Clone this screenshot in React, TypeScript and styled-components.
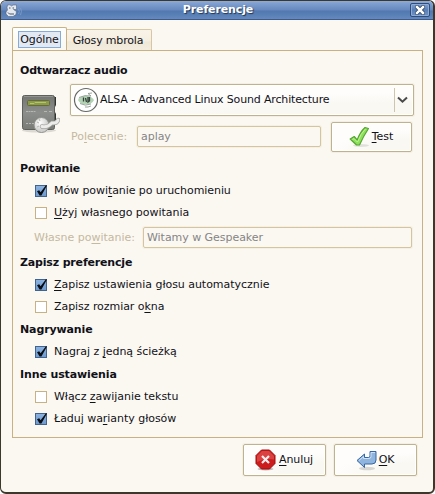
import React from "react";
import styled, { createGlobalStyle, css } from "styled-components";

const Global = createGlobalStyle`
  * { box-sizing: border-box; }
  body { margin: 0; background: #fff; }
  body, button, input { font: 11px/16px "DejaVu Sans", sans-serif; color: #111118; }
`;

const Window = styled.div`
  width: 435px;
  height: 494px;
  display: flex;
  flex-direction: column;
  background: #fbf8f1;
  border: 1px solid #3d382c;
  border-right-width: 2px;
  border-bottom-width: 2px;
  border-radius: 6px;
  overflow: hidden;
`;

const TitleBar = styled.header`
  height: 19px;
  flex: none;
  display: grid;
  grid-template-columns: 28px 1fr 28px;
  align-items: center;
  border-bottom: 1px solid #3c5a8c;
  background: linear-gradient(#8fabd8 0, #7d9dce 3px, #6688bd 9px, #5178b0 10px, #6389bd 18px);
`;

const Title = styled.h1`
  margin: 0;
  padding-left: 2px;
  text-align: center;
  font-size: 11px;
  line-height: 16px;
  letter-spacing: -0.12px;
  color: #fff;
  text-shadow: 1px 1px 1px #1e3558;
`;

const AppIcon = styled.svg`
  width: 20px;
  height: 14px;
  margin: 2px 0 0 3px;
`;

const CloseButton = styled.button`
  width: 20px;
  height: 14px;
  padding: 0;
  margin-left: 5px;
  display: flex;
  align-items: center;
  justify-content: center;
  border: 1px solid #2f4d7c;
  border-radius: 2px;
  background: linear-gradient(#7f9fce, #587fb6 50%, #6f93c5);
  box-shadow: inset 0 0 0 1px #8dabd5;
`;

const Body = styled.main`
  flex: 1;
  display: flex;
  flex-direction: column;
  padding: 7px 10px 0 11px;
`;

const Tabs = styled.nav`
  display: flex;
  align-items: flex-end;
  height: 24px;
  margin-bottom: -1px;
`;

const Tab = styled.button<{ $active?: boolean }>`
  padding: 0;
  display: flex;
  align-items: center;
  justify-content: center;
  border: 1px solid #c8b283;
  ${(p) =>
    p.$active
      ? css`
          width: 55px;
          height: 24px;
          border-bottom-color: #fbf8f1;
          background: linear-gradient(#ffffff, #fcfaf5 60%, #fbf8f1);
          border-radius: 2px 2px 0 0;
        `
      : css`
          width: 85px;
          height: 22px;
          border-left: 0;
          border-top-color: #d7c69f;
          border-right-color: #d7c69f;
          padding: 1px 2px 0 0;
          letter-spacing: -0.17px;
          background: linear-gradient(#f8f3e9 0, #f5eee1 11px, #efe7d7 12px, #f4ecdf);
          border-radius: 0 2px 0 0;
        `}
`;

const FocusLabel = styled.span`
  width: 43px;
  height: 17px;
  line-height: 15px;
  letter-spacing: -0.1px;
  border: 1px solid #86abd6;
  background: #e3e9f2;
`;

const Panel = styled.section`
  height: 388px;
  flex: none;
  border: 1px solid #c8b283;
  padding: 8px 8px 0 7px;
`;

const Heading = styled.h2<{ $h?: number; $s?: number }>`
  margin: 0;
  height: ${(p) => p.$h ?? 22}px;
  line-height: ${(p) => (p.$h ? 26 : 24)}px;
  font-size: 11px;
  letter-spacing: ${(p) => p.$s ?? -0.12}px;
`;

const AudioRow = styled.div`
  display: flex;
  height: 68px;
  margin: 3px 0 5px;
`;

const PlayerIcon = styled.svg`
  width: 40px;
  height: 40px;
  margin: 10px 10px 0 0;
  flex: none;
`;

const AudioFields = styled.div`
  width: 344px;
  flex: none;
  display: flex;
  flex-direction: column;
  gap: 6px;
`;

const raised = css`
  border: 1px solid #bfb28e;
  border-radius: 2px;
  background: radial-gradient(ellipse 100% 75% at 100% 100%, #faf8f3 0 55%, #fefdfc 100%);
  box-shadow: 0 0 0 1px #f4efe4, inset 0 0 0 1px #fff;
`;

const Combo = styled.div`
  height: 32px;
  display: flex;
  align-items: center;
  padding-left: 2px;
  ${raised}
`;

const ComboText = styled.span`
  flex: 1;
  padding-left: 1px;
  white-space: nowrap;
  letter-spacing: -0.16px;
`;

const ComboArrow = styled.span`
  width: 19px;
  height: 24px;
  border-left: 1px solid #cfc5a9;
  display: flex;
  align-items: center;
  padding-left: 2px;
`;

const CommandRow = styled.div`
  display: flex;
  align-items: center;
`;

const TestSlot = styled.div`
  margin-left: 10px;
`;

const FieldLabel = styled.label<{ $w: number }>`
  width: ${(p) => p.$w}px;
  flex: none;
  padding-left: 1px;
  color: #c5b99f;
  white-space: nowrap;
`;

const Entry = styled.input<{ $w: number }>`
  width: ${(p) => p.$w}px;
  height: 21px;
  margin-bottom: 1px;
  padding: 0 3px;
  border: 1px solid #d5c49c;
  border-radius: 2px;
  background: #fbf8f1;
  color: #858585;
  letter-spacing: -0.04px;
  box-shadow: 0 0 0 1px #f5f0e5;
`;

const Button = styled.button<{ $w: number; $h?: number; $gap?: number }>`
  width: ${(p) => p.$w}px;
  height: ${(p) => p.$h ?? 32}px;
  padding: 0 1px 0 0;
  display: flex;
  align-items: center;
  justify-content: center;
  gap: ${(p) => p.$gap ?? 3}px;
  ${raised}
`;

const CheckRow = styled.label`
  height: 22px;
  display: flex;
  align-items: center;
  padding: 2px 0 0 15px;
  gap: 7px;
  white-space: nowrap;
`;

const CheckBox = styled.span<{ $on?: boolean }>`
  width: 12px;
  height: 12px;
  border: 1px solid ${(p) => (p.$on ? "#40648f" : "#c8b283")};
  background: ${(p) => (p.$on ? "linear-gradient(#8bb2e0, #6e9bd0)" : "#fff")};
`;

const Tick = styled.svg`
  display: block;
  width: 12px;
  height: 12px;
  margin: -1px;
  overflow: visible;
`;

const FieldRow = styled.div`
  height: 28px;
  padding: 1px 0 0 13px;
  display: flex;
  align-items: center;
`;

const Footer = styled.footer`
  display: flex;
  justify-content: flex-end;
  gap: 8px;
  padding: 6px 6px 0 0;
`;

const Key = styled.span`
  text-decoration: underline;
  text-decoration-thickness: 1px;
  text-underline-offset: 2px;
  text-decoration-skip-ink: none;
`;

const Label = styled.span<{ $s?: number }>`
  letter-spacing: ${(p) => p.$s ?? 0}px;
`;

/* An underscore marks the letter that follows it as the keyboard mnemonic. */
function Mnemonic({ text, spacing }: { text: string; spacing?: number }) {
  const i = text.indexOf("_");
  if (i < 0) return <Label $s={spacing}>{text}</Label>;
  return (
    <Label $s={spacing}>
      {text.slice(0, i)}
      <Key>{text[i + 1]}</Key>
      {text.slice(i + 2)}
    </Label>
  );
}

function Check({ text, on, spacing = -0.04 }: { text: string; on?: boolean; spacing?: number }) {
  return (
    <CheckRow>
      <CheckBox $on={on}>
        {on && (
          <Tick viewBox="0 0 12 12">
            <path d="M2 6.300 4.200 5.200 5.600 7.300 10.900.300 12 .5 6.400 10.600H4.600Z" fill="#0a0d12" />
          </Tick>
        )}
      </CheckBox>
      <Mnemonic text={text} spacing={spacing} />
    </CheckRow>
  );
}

function Player() {
  return (
    <PlayerIcon viewBox="0 0 40 40">
      <defs>
        <linearGradient id="case" x2="0" y2="1">
          <stop stopColor="#727571" />
          <stop offset=".5" stopColor="#8b8e8a" />
          <stop offset="1" stopColor="#787b76" />
        </linearGradient>
        <radialGradient id="dial" cx=".4" cy=".35">
          <stop stopColor="#fff" />
          <stop offset="1" stopColor="#d0d1cf" />
        </radialGradient>
      </defs>
      <ellipse cx="19" cy="36.5" rx="17" ry="2" fill="#000" opacity=".12" />
      <path d="M34 3h2v8l-1 2v5l1 2v6h-2Z" fill="#30332f" />
      <rect x="2.5" y="1.500" width="32" height="34" rx="2" fill="url(#case)" stroke="#5d605b" />
      <path d="M4 2.500h29" stroke="#91948f" />
      <rect x="7.500" y="6.500" width="22" height="5" rx="1" fill="#8c9b4a" stroke="#656b3b" />
      <path d="M10 9.500h4l1-1h11" stroke="#b4c568" fill="none" />
      <path d="M6 17.500h10" stroke="#b4b7b2" strokeDasharray="2 .5" />
      <path d="M24 17.500h3m2 0h3M6 29.500h2m1 0h2m1 0h2" stroke="#b4b7b2" />
      <circle cx="21.500" cy="31" r="7.500" fill="url(#dial)" stroke="#8e918c" />
      <path d="m17 28 2 1m0-4 1 2m-3 6 2-1m3 3v-2" stroke="#b4b7b2" />
      <path d="M22 32.500c5 1 7-1 10-3.500 1 0 5 1 6-3" stroke="#a3a5a1" strokeWidth="4.400" strokeLinecap="round" fill="none" />
      <path d="M22 32.500c5 1 7-1 10-3.500 1 0 5 1 6-3" stroke="#ececea" strokeWidth="3" strokeLinecap="round" fill="none" />
    </PlayerIcon>
  );
}

export default function App() {
  return (
    <>
      <Global />
      <Window>
        <TitleBar>
          <AppIcon viewBox="0 0 20 14">
            <path d="M3 3.500 3.500 1 6 .8 7.500 2 9 1h3.500v4.500H9.500l3 2-.5 3-3 2H4.500L2 10V8l1.500-2Z" fill="#e5e8ec" stroke="#55677f" strokeWidth=".6" />
            <path d="M5 4h1.500m2 0H10M4 8.500l1.500 1.500H10" stroke="#45597a" fill="none" />
            <path d="M14.500 5q1.500 2.500 0 5m2-6q2 3 0 7" stroke="#86a4d0" fill="none" strokeWidth=".7" />
          </AppIcon>
          <Title>Preferencje</Title>
          <CloseButton aria-label="Zamknij">
            <svg width="10" height="10" viewBox="0 0 10 10">
              <path d="m2 2 6 6m0-6L2 8" stroke="#243d62" strokeWidth="4" strokeLinecap="square" />
              <path d="m2 2 6 6m0-6L2 8" stroke="#fff" strokeWidth="2.500" strokeLinecap="square" />
            </svg>
          </CloseButton>
        </TitleBar>
        <Body>
          <Tabs>
            <Tab $active>
              <FocusLabel>Ogólne</FocusLabel>
            </Tab>
            <Tab>Głosy mbrola</Tab>
          </Tabs>
          <Panel>
            <Heading $s={-0.2}>Odtwarzacz audio</Heading>
            <AudioRow>
              <Player />
              <AudioFields>
                <Combo>
                  <svg width="26" height="26" viewBox="0 0 26 26">
                    <circle cx="13" cy="13" r="11.500" fill="#fff" stroke="#626864" strokeWidth="1.200" />
                    <path d="M5 13q2-4.500 9-4 5 .5 7 4-2 4.500-9 4.500-5-.5-7-4.500Z" fill="#b2d3b4" />
                    <path d="M6 10.500q6-3 12-1.500l-3-2.500 4-.5M7 16.500q5 3 11 .5m-6 3q3 .5 6-1" stroke="#8f9891" strokeWidth=".9" fill="none" />
                    <path d="M10.500 10.500v4M12.500 11l1 4m1.500-5v5l1.500-1v-4" stroke="#344039" strokeWidth="1.300" fill="none" />
                  </svg>
                  <ComboText>ALSA - Advanced Linux Sound Architecture</ComboText>
                  <ComboArrow>
                    <svg width="11" height="8" viewBox="0 0 11 8">
                      <path d="m1 1.500 4.500 4.200L10 1.500" stroke="#4a4a4a" strokeWidth="2" fill="none" />
                    </svg>
                  </ComboArrow>
                </Combo>
                <CommandRow>
                  <FieldLabel $w={67}>
                    <Mnemonic text="Po_lecenie:" />
                  </FieldLabel>
                  <Entry $w={184} defaultValue="aplay" disabled />
                  <TestSlot>
                    <Button $w={81} $h={30} $gap={1}>
                      <svg width="22" height="22" viewBox="0 0 22 22">
                        <ellipse cx="12" cy="19.500" rx="8" ry="1.500" fill="#000" opacity=".1" />
                        <path d="m1.200 13 4-2.500 3 3.500Q11 6 16 1.500l3.500 1Q14.500 10 10.500 19H7.500Z" fill="#8be05a" stroke="#55a530" strokeWidth="1.200" strokeLinejoin="round" />
                        <path d="m3.500 13.500 1.500-.9 3.500 3.500Q12 7 16.500 3" stroke="#c4f399" fill="none" />
                      </svg>
                      <Mnemonic text="_Test" />
                    </Button>
                  </TestSlot>
                </CommandRow>
              </AudioFields>
            </AudioRow>
            <Heading>Powitanie</Heading>
            <Check on text="Mów powi_tanie po uruchomieniu" spacing={-0.07} />
            <Check text="_Użyj własnego powitania" />
            <FieldRow>
              <FieldLabel $w={110}>
                <Mnemonic text="Własne po_witanie:" />
              </FieldLabel>
              <Entry $w={269} defaultValue="Witamy w Gespeaker" disabled />
            </FieldRow>
            <Heading $s={-0.17}>Zapisz preferencje</Heading>
            <Check on text="_Zapisz ustawienia głosu automatycznie" />
            <Check text="Zapisz rozmiar o_kna" spacing={-0.06} />
            <Heading $h={23}>Nagrywanie</Heading>
            <Check on text="Nagraj z _jedną ścieżką" />
            <Heading $h={23}>Inne ustawienia</Heading>
            <Check text="Włącz _zawijanie tekstu" />
            <Check on text="Ładuj wa_rianty głosów" />
          </Panel>
          <Footer>
            <Button $w={83}>
              <svg width="21" height="22" viewBox="0 0 21 22">
                <ellipse cx="10.500" cy="20" rx="8" ry="1.500" fill="#000" opacity=".25" />
                <path d="M6.500 1h8L20 6.500v8L14.500 20h-8L1 14.500v-8Z" fill="#cc1c1c" stroke="#a00c0c" />
                <path d="M7 2h7l5 5v3.500Q10 9 2 13V7Z" fill="#e25656" opacity=".65" />
                <path d="m7 7 7 7m0-7-7 7" stroke="#f5eeee" strokeWidth="2.200" />
              </svg>
              <Mnemonic text="_Anuluj" spacing={-0.1} />
            </Button>
            <Button $w={83} $gap={2}>
              <svg width="21" height="21" viewBox="0 0 21 21">
                <ellipse cx="11" cy="18.500" rx="8" ry="1.800" fill="#000" opacity=".14" />
                <path d="M1 10.500 8.500 4v3.500h4q1.500 0 1.500-1.500V1.500h6V10q0 4-4 4H8.500v3.500Z" fill="#8fb5de" stroke="#3465a4" strokeLinejoin="round" />
                <path d="M3 10.500 7.500 6.500v2H13q2 0 2-2v-4h4" stroke="#cfe1f4" fill="none" />
              </svg>
              <Mnemonic text="_OK" spacing={-0.2} />
            </Button>
          </Footer>
        </Body>
      </Window>
    </>
  );
}
